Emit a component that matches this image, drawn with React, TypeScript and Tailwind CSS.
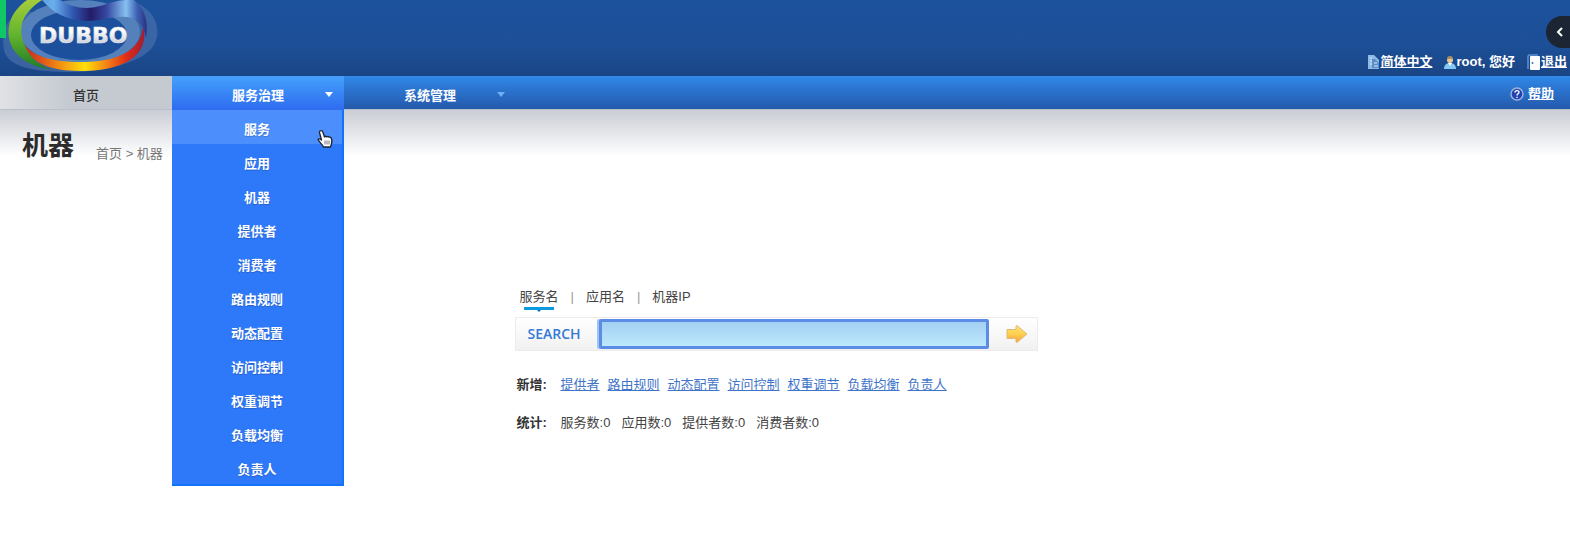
import { useState } from "react";

const menuItems = [
  "服务",
  "应用",
  "机器",
  "提供者",
  "消费者",
  "路由规则",
  "动态配置",
  "访问控制",
  "权重调节",
  "负载均衡",
  "负责人",
];

const addLinks = menuItems.slice(3).filter((item) => item !== "消费者");

const stats = [
  { name: "服务数", count: 0 },
  { name: "应用数", count: 0 },
  { name: "提供者数", count: 0 },
  { name: "消费者数", count: 0 },
];

const searchTypes = ["服务名", "应用名", "机器IP"];

function Logo() {
  return (
    <svg
      width="160"
      height="76"
      viewBox="0 0 160 76"
      role="img"
      aria-label="DUBBO"
    >
      <defs>
        <linearGradient id="rim" x1="24" y1="0" x2="146" y2="0" gradientUnits="userSpaceOnUse">
          <stop offset="0" stopColor="#c8281c" />
          <stop offset="0.12" stopColor="#dc4a1a" />
          <stop offset="0.3" stopColor="#f39212" />
          <stop offset="0.5" stopColor="#fde008" />
          <stop offset="0.66" stopColor="#f58c14" />
          <stop offset="0.84" stopColor="#e02c18" />
          <stop offset="1" stopColor="#9c1c34" />
        </linearGradient>
        <linearGradient id="top" x1="38" y1="0" x2="148" y2="0" gradientUnits="userSpaceOnUse">
          <stop offset="0" stopColor="#5d9ddd" />
          <stop offset="0.14" stopColor="#6ab0ec" />
          <stop offset="0.32" stopColor="#2f55b0" />
          <stop offset="0.48" stopColor="#241c68" />
          <stop offset="0.62" stopColor="#3446a0" />
          <stop offset="0.8" stopColor="#86c0f0" />
          <stop offset="0.9" stopColor="#3c62b4" />
          <stop offset="1" stopColor="#2a2a7c" />
        </linearGradient>
        <linearGradient id="green" x1="0" y1="0" x2="0" y2="1">
          <stop offset="0" stopColor="#a4cc3c" />
          <stop offset="0.5" stopColor="#62b42c" />
          <stop offset="1" stopColor="#1f7a28" />
        </linearGradient>
        <linearGradient id="letters" x1="0" y1="0" x2="0" y2="1">
          <stop offset="0.3" stopColor="#ffffff" />
          <stop offset="1" stopColor="#b9c0cc" />
        </linearGradient>
      </defs>
      <path
        d="M4 50C0 28 10 10 34 12 60 2 110 18 134 2c24 8 30 34 16 48-14 14-48 22-80 22C36 72 8 68 4 50Z"
        fill="#5478b0"
        opacity="0.55"
      />
      <ellipse cx="80" cy="32" rx="60" ry="32" fill="#5480bc" />
      <ellipse cx="79" cy="35" rx="48" ry="25" fill="#1d509c" />
      <path
        d="M24 44c8 12 28 18 56 18 36 0 61-10 63-36 6 22-8 45-63 45C46 71 28 60 24 44Z"
        fill="url(#rim)"
      />
      <path
        d="M27 0C10 12 6 28 10 42c4 14 20 25 42 28-12-4-22-12-27-24C16 26 24 12 42 0Z"
        fill="url(#green)"
      />
      <path
        d="M42 0h18c12 8 26 10 40 6 10-3 18-6 26-6h8c10 8 15 20 12 38-2-10-6-18-14-20-16-4-30 4-48 3C66 20 52 12 42 0Z"
        fill="url(#top)"
      />
      <text
        x="39"
        y="43"
        fontFamily="DejaVu Sans"
        fontWeight="700"
        fontSize="22"
        stroke="#e4e8ef"
        strokeWidth="0.600"
        fill="url(#letters)"
      >
        DUBBO
      </text>
      <path d="M0 0h6v38H0Z" fill="#0fc765" />
    </svg>
  );
}

function LanguageIcon() {
  return (
    <svg width="13" height="16" viewBox="0 0 13 16" aria-hidden="true">
      <path d="M1 1h6l5 5v9H1Z" fill="#8dbbe6" />
      <path d="M5 5h3l4 4v5H5Z" fill="#5b8dc8" />
      <path d="M3 4h2M3 7h2M3 10h2M7 9h3M7 12h4" stroke="#dbeaf8" />
    </svg>
  );
}

function UserIcon() {
  return (
    <svg width="12" height="14" viewBox="0 0 12 14" aria-hidden="true">
      <path d="M0 14c0-4 2.500-6 6-6s6 2 6 6Z" fill="#86c8f4" />
      <path d="M4 8l2 3 2-3Z" fill="#fff" />
      <circle cx="6" cy="5" r="3" fill="#e9c99a" />
      <path d="M3 4.500C3 2 4 1 6 1s3 1 3 3.500C8 3.500 5 3.500 3 4.500Z" fill="#a58c62" />
    </svg>
  );
}

function ExitIcon() {
  return (
    <svg width="14" height="17" viewBox="0 0 14 17" aria-hidden="true">
      <path d="M1 15V2.500Q1 1 2.500 1H11" fill="none" stroke="#5f93d4" strokeWidth="1.500" />
      <rect x="3" y="2" width="10" height="14" rx="1" fill="#fff" />
      <circle cx="5.500" cy="9" r="1" fill="#3b6fb6" />
    </svg>
  );
}

function HelpIcon() {
  return (
    <svg width="14" height="14" viewBox="0 0 14 14" aria-hidden="true">
      <circle cx="7" cy="7" r="6" fill="#2343b0" stroke="#9fb4dc" strokeWidth="1.400" />
      <path
        d="M5 5.500C5 3 9 3 9 5.300 9 6.800 7 6.800 7 8.500M7 9.700v1.300"
        fill="none"
        stroke="#fff"
        strokeWidth="1.400"
      />
    </svg>
  );
}

function HandCursor() {
  return (
    <svg
      className="pointer-events-none absolute top-5 left-36"
      width="18"
      height="20"
      viewBox="0 0 16 20"
      aria-hidden="true"
    >
      <path
        d="M3 2C4.500 1 5.500 2 6 3.500L7.500 8l1-.8 1.200.6 1.300-.4 1.200.8 1.600.2c1.200 1.500 1.400 4 .7 6.300L13.500 18H6.500C5.500 15.500 2 12.500 1.200 10.800 1 9.500 2.800 9.300 4.500 11L2.600 4C2.300 3 2.300 2.500 3 2Z"
        fill="#fff"
        stroke="#1b2434"
        strokeWidth="1.300"
        strokeLinejoin="round"
      />
      <path d="M8 11.500v4M10 11.500v4M12 11.500v4" stroke="#4b5260" strokeWidth="0.800" />
    </svg>
  );
}

function ArrowIcon() {
  return (
    <svg width="24" height="20" viewBox="0 0 24 20" aria-hidden="true">
      <defs>
        <linearGradient id="gold" x1="0" y1="0" x2="0" y2="1">
          <stop offset="0" stopColor="#ffe470" />
          <stop offset="0.5" stopColor="#fdd050" />
          <stop offset="1" stopColor="#f9a040" />
        </linearGradient>
      </defs>
      <path
        d="M2 5.500h9V2.500Q11 1 12.500 2L22 10l-9.500 8Q11 19 11 17.500v-3H2Z"
        fill="url(#gold)"
        stroke="#e0b877"
        strokeLinejoin="round"
      />
    </svg>
  );
}

function Header() {
  return (
    <header className="flex h-[76px] items-start justify-between bg-gradient-to-b from-[#1c519c] via-[#1c4f97] via-60% to-[#1a4585]">
      <Logo />
      <div className="relative flex items-center self-end pr-[3px] pb-1 text-[13px] leading-5 font-bold text-white">
        <LanguageIcon />
        <a href="#lang" className="mr-3 underline">
          简体中文
        </a>
        <UserIcon />
        <span className="mr-3">root, 您好</span>
        <ExitIcon />
        <a href="#logout" className="underline">
          退出
        </a>
        <button
          type="button"
          aria-label="展开"
          className="absolute right-0 bottom-7 flex h-8 w-6 items-center justify-center rounded-l-full bg-[#1b2533] pl-1"
        >
          <svg width="8" height="10" viewBox="0 0 8 10" aria-hidden="true">
            <path d="M6 1L2 5l4 4" fill="none" stroke="#fff" strokeWidth="2" />
          </svg>
        </button>
      </div>
    </header>
  );
}

function Navigation() {
  return (
    <nav className="flex h-[34px] border-b border-[#b8c0cc] bg-gradient-to-b from-[#3088e8] to-[#2459ac] text-[13px] font-bold text-white">
      <a
        href="#home"
        className="flex w-43 items-center justify-center bg-gradient-to-r from-[#e0e2e5] to-[#c5cad1] to-40% pt-[6px] font-medium text-[#333]"
      >
        首页
      </a>
      <div className="relative w-43">
        <button
          type="button"
          className="relative flex h-[34px] w-full items-center justify-center bg-gradient-to-b from-[#46a0fb] to-[#2f6bf0] pt-[6px]"
        >
          服务治理
          <span className="absolute top-4 right-[11px] border-x-4 border-t-5 border-x-transparent border-t-white" />
        </button>
        <ul className="absolute top-[34px] left-0 z-10 w-full border-r-2 border-b-2 border-[#0f73fb] bg-[#2e78fa] text-shadow-xs">
          {menuItems.map((item, i) => (
            <li key={item}>
              <a
                href="#menu"
                className={`flex h-[34px] items-center justify-center pt-[6px] ${
                  i === 0 ? "bg-[#4c8ffc]" : ""
                }`}
              >
                {item}
              </a>
            </li>
          ))}
        </ul>
        <div className="absolute top-full z-20">
          <HandCursor />
        </div>
      </div>
      <button
        type="button"
        className="relative flex w-43 items-center justify-center pt-[6px]"
      >
        系统管理
        <span className="absolute top-4 right-[11px] border-x-4 border-t-5 border-x-transparent border-t-[#6fb0f4]" />
      </button>
      <div className="ml-auto flex items-center gap-1 pt-[2px] pr-4">
        <HelpIcon />
        <a href="#help" className="underline">
          帮助
        </a>
      </div>
    </nav>
  );
}

function SearchForm() {
  const [type, setType] = useState(0);
  const [keyword, setKeyword] = useState("");

  return (
    <form className="w-[523px]" onSubmit={(e) => e.preventDefault()}>
      <div className="flex h-[30px] pl-[5px]">
        {searchTypes.map((label, i) => (
          <div key={label} className="flex">
            {i > 0 && <span className="mx-3 text-[#999]">|</span>}
            <button
              type="button"
              onClick={() => setType(i)}
              className="flex flex-col items-center"
            >
              {label}
              {type === i && (
                <span className="flex h-[3px] w-[30px] justify-center bg-[#0c9be0]">
                  <span className="mt-[3px] h-0 border-x-2 border-t-2 border-x-transparent border-t-[#0c6fc0]" />
                </span>
              )}
            </button>
          </div>
        ))}
      </div>
      <div className="flex h-[34px] items-center border border-[#ececec] bg-gradient-to-b from-white to-[#f1f1f1]">
        <label
          htmlFor="keyword"
          className="w-[83px] pl-3 font-['Open_Sans'] text-[14px] font-semibold text-[#3479d6]"
        >
          SEARCH
        </label>
        <input
          id="keyword"
          value={keyword}
          onChange={(e) => setKeyword(e.target.value)}
          className="h-[30px] flex-1 rounded-xs border-3 border-[#5c8ce6] bg-gradient-to-b from-[#a3cff3] to-[#bce9fc] px-2 shadow-[-2px_0_0_#9cc4f4] outline-none"
        />
        <button
          type="submit"
          aria-label="搜索"
          className="flex w-12 justify-center pl-2"
        >
          <ArrowIcon />
        </button>
      </div>
    </form>
  );
}

export default function App() {
  return (
    <div className="min-h-screen bg-white font-['Liberation_Sans','Noto_Sans_CJK_SC',sans-serif] text-[13px] leading-5 text-[#444]">
      <Header />
      <Navigation />
      <main className="bg-gradient-to-b from-[#cacdd5] to-white to-[46px]">
        <div className="flex items-end gap-[22px] pt-[18px] pl-[22px]">
          <h1 className="text-[26px] leading-9 font-bold text-[#2c2c2c]">
            机器
          </h1>
          <p className="text-[#777]">首页 &gt; 机器</p>
        </div>
        <section className="flex justify-center pt-[123px] pr-[18px]">
          <div>
            <SearchForm />
            <div className="flex pt-6 pl-[2px]">
              <b className="w-11 text-[#333]">新增:</b>
              <div className="flex gap-2">
                {addLinks.map((item) => (
                  <a key={item} href="#add" className="text-[#3f74c8] underline">
                    {item}
                  </a>
                ))}
              </div>
            </div>
            <div className="flex pt-[18px] pl-[2px]">
              <b className="w-11 text-[#333]">统计:</b>
              <div className="flex gap-[11px]">
                {stats.map((s) => (
                  <span key={s.name}>
                    {s.name}:{s.count}
                  </span>
                ))}
              </div>
            </div>
          </div>
        </section>
      </main>
    </div>
  );
}
